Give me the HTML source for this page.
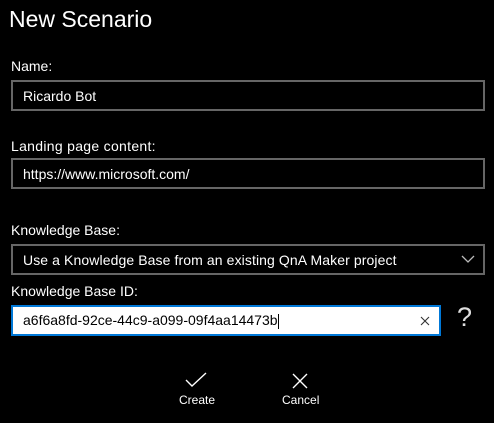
<!DOCTYPE html>
<html><head><style>
body{margin:0;width:494px;height:423px;background:#000;color:#fff;font-family:"Liberation Sans",sans-serif;position:relative;overflow:hidden}
.a{position:absolute}
.lbl{font-size:14px;left:11px}
.box{left:11px;width:469px;height:28px;border:2px solid #666;box-sizing:content-box;font-size:14px;line-height:28px}
.box span{padding-left:10px}
</style></head><body>
<div class="a" style="left:9px;top:6px;font-size:23px">New Scenario</div>
<div class="a lbl" style="top:58px">Name:</div>
<div class="a box" style="top:80px;width:470px;height:27px"><span>Ricardo Bot</span></div>
<div class="a lbl" style="top:138px;letter-spacing:0.3px">Landing page content:</div>
<div class="a box" style="top:158px;width:470px;height:27px"><span>https://www.microsoft.com/</span></div>
<div class="a lbl" style="top:222px">Knowledge Base:</div>
<div class="a box" style="top:244px;width:470px;height:27px"><span style="letter-spacing:0.1px">Use a Knowledge Base from an existing QnA Maker project</span>
<svg class="a" style="right:8px;top:9px" width="14" height="9"><path d="M1 1L7 7L13 1" stroke="#bbb" stroke-width="1.3" fill="none"/></svg></div>
<div class="a lbl" style="top:283px">Knowledge Base ID:</div>
<div class="a" style="left:11px;top:305px;width:426px;height:27px;border:2px solid #0078d7;background:#fff;color:#000;font-size:14px;line-height:27px"><span style="padding-left:10px">a6f6a8fd-92ce-44c9-a099-09f4aa14473b</span><span style="border-left:1px solid #000;height:15px;display:inline-block;vertical-align:middle"></span>
<svg class="a" style="right:9px;top:9px" width="10" height="10"><path d="M1 1L9 9M9 1L1 9" stroke="#333" stroke-width="1.1"/></svg></div>
<div class="a" style="left:457px;top:302px;font-size:27px;color:#ddd">?</div>
<svg class="a" style="left:185px;top:372px" width="22" height="16"><path d="M1 8L7 14L21 1" stroke="#fff" stroke-width="1.4" fill="none"/></svg>
<div class="a" style="left:179px;top:393px;font-size:12px">Create</div>
<svg class="a" style="left:292px;top:373px" width="16" height="16"><path d="M1 1L15 15M15 1L1 15" stroke="#fff" stroke-width="1.4"/></svg>
<div class="a" style="left:282px;top:393px;font-size:12px">Cancel</div>
</body></html>
